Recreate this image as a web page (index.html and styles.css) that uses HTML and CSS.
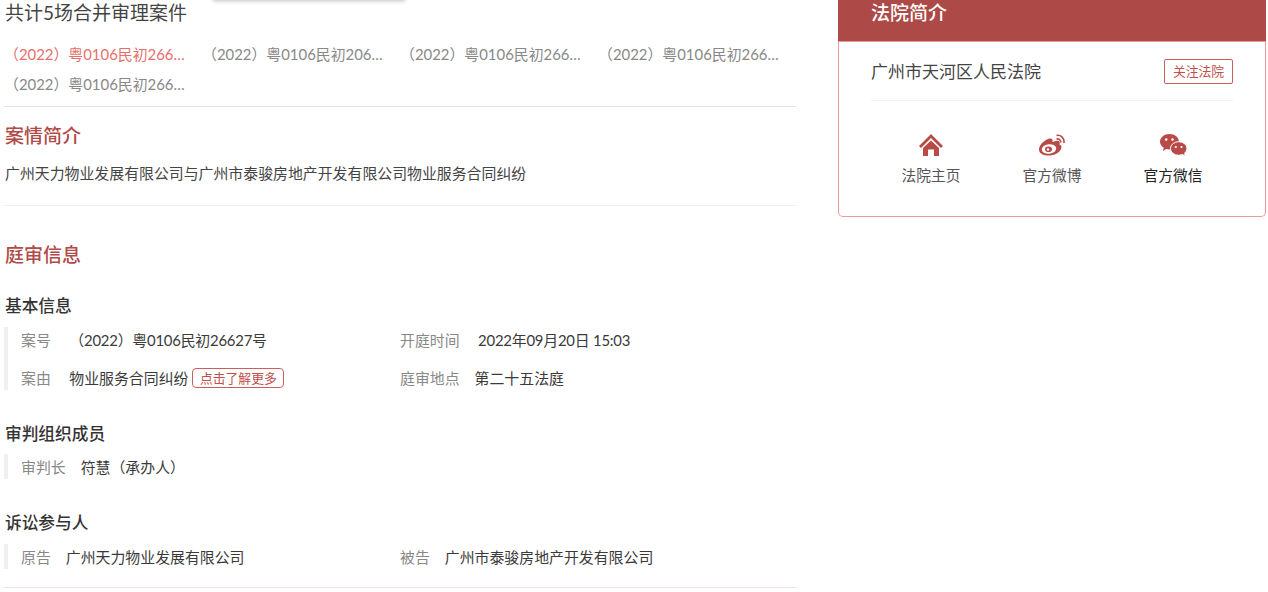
FILE: index.html
```html
<!DOCTYPE html>
<html lang="zh-CN">
<head>
    <meta charset="UTF-8">
    <meta name="viewport" content="width=device-width, initial-scale=1.0">
    <title>庭审信息</title>
    <link rel="stylesheet" href="styles.css">
</head>
<body>
    <div class="popup-edge"></div>
    <div class="page">
        <div class="main">
            <h3 class="merge-title">共计5场合并审理案件</h3>
            <div class="case-tabs">
                <a class="case-tab active">（2022）粤0106民初266…</a>
                <a class="case-tab">（2022）粤0106民初206…</a>
                <a class="case-tab">（2022）粤0106民初266…</a>
                <a class="case-tab">（2022）粤0106民初266…</a>
                <a class="case-tab">（2022）粤0106民初266…</a>
            </div>

            <div class="brief">
                <h2 class="red-title">案情简介</h2>
                <p class="brief-text">广州天力物业发展有限公司与广州市泰骏房地产开发有限公司物业服务合同纠纷</p>
            </div>

            <div class="trial">
                <h2 class="red-title">庭审信息</h2>

                <h4 class="sub-title">基本信息</h4>
                <div class="info-block">
                    <div class="info-row">
                        <div class="info-item wide-gap"><span class="label">案号</span><span class="value num">（2022）粤0106民初26627号</span></div>
                        <div class="info-item wide-gap"><span class="label">开庭时间</span><span class="value num">2022年09月20日 15:03</span></div>
                    </div>
                    <div class="info-row">
                        <div class="info-item wide-gap"><span class="label">案由</span><span class="value">物业服务合同纠纷</span><a class="more-btn">点击了解更多</a></div>
                        <div class="info-item"><span class="label">庭审地点</span><span class="value">第二十五法庭</span></div>
                    </div>
                </div>

                <h4 class="sub-title tight">审判组织成员</h4>
                <div class="info-block">
                    <div class="info-row">
                        <div class="info-item"><span class="label">审判长</span><span class="value">符慧（承办人）</span></div>
                    </div>
                </div>

                <h4 class="sub-title">诉讼参与人</h4>
                <div class="info-block">
                    <div class="info-row">
                        <div class="info-item"><span class="label">原告</span><span class="value">广州天力物业发展有限公司</span></div>
                        <div class="info-item"><span class="label">被告</span><span class="value">广州市泰骏房地产开发有限公司</span></div>
                    </div>
                </div>
            </div>
        </div>

        <div class="court-card">
            <div class="court-head">法院简介</div>
            <div class="court-body">
                <div class="court-name-row">
                    <span class="court-name">广州市天河区人民法院</span>
                    <a class="follow-btn">关注法院</a>
                </div>
                <div class="court-links">
                    <a class="court-link">
                        <svg class="icon" width="24" height="22" viewBox="0 0 24 22">
                            <path d="M12 0 L24 12 L22 14 L12 4 L2 14 L0 12 Z"/>
                            <path d="M4 14 L12 6.500 L20 14 V22 H15 V15.500 H9 V22 H4 Z"/>
                        </svg>
                        <span>法院主页</span>
                    </a>
                    <a class="court-link">
                        <svg class="icon" width="26" height="22" viewBox="0 0 26 22">
                            <path d="M17 7 C20 6 21.500 8 20.500 10.500 C22.500 11.200 23 13 22 15 C20 19.500 14.500 21.500 9.500 21.500 C4.500 21.500 0 19.500 0 15.500 C0 12 3 8.500 6.500 6.200 C10 4 12.500 4.200 13.300 5.500 C13.800 6.400 13.600 7.300 13.300 8 C14.500 7.700 15.800 7.300 17 7 Z"/>
                            <ellipse cx="10" cy="15" rx="7.300" ry="4.800" fill="#fff" transform="rotate(-8 10 15)"/>
                            <ellipse cx="9.500" cy="15.300" rx="3.500" ry="2.800"/>
                            <circle cx="9" cy="15.500" r="1.200" fill="#fff"/>
                            <path class="wave" d="M17.500 5 C19.500 4.500 21.500 5.500 22 8.500"/>
                            <path class="wave" d="M17.500 1.500 C21.500 0.500 25.500 3.500 25 9"/>
                        </svg>
                        <span>官方微博</span>
                    </a>
                    <a class="court-link dark">
                        <svg class="icon" width="27" height="22" viewBox="0 0 27 22">
                            <path d="M9.500 0 C14.700 0 19 3.400 19 7.800 C19 12.200 14.700 15.600 9.500 15.600 C8.300 15.600 7.200 15.400 6.200 15.100 L3 17 L3.700 13.800 C1.400 12.300 0 10.200 0 7.800 C0 3.400 4.300 0 9.500 0 Z"/>
                            <ellipse cx="18.700" cy="14.500" rx="8.300" ry="6.800" stroke="#fff" stroke-width="1"/>
                            <path d="M22 19 L24.500 21.800 L24 18 Z"/>
                            <circle cx="6.200" cy="5.500" r="1.300" fill="#fff"/>
                            <circle cx="12.500" cy="5.500" r="1.300" fill="#fff"/>
                            <circle cx="15.800" cy="13" r="1.100" fill="#fff"/>
                            <circle cx="21.500" cy="13" r="1.100" fill="#fff"/>
                        </svg>
                        <span>官方微信</span>
                    </a>
                </div>
            </div>
        </div>
    </div>
</body>
</html>
```

FILE: styles.css
```css
html, body { height: 592px; overflow: hidden; }
body { margin: 0; background: #fff; color: #333; font-family: Lato, "Noto Sans CJK SC", sans-serif; }
h2, h3, h4, p { margin: 0; }
.popup-edge { position: absolute; left: 213px; top: -6px; width: 192px; height: 6px; box-shadow: 0 1px 4px rgba(0, 0, 0, 0.25); }
.page { display: flex; align-items: flex-start; padding-left: 4px; }
.main { width: 792px; }

.merge-title { font-size: 19px; font-weight: 400; line-height: 26px; padding-left: 1px; color: #444; }
.case-tabs { display: flex; flex-wrap: wrap; padding: 13px 0 7px; border-bottom: 1px solid #e3e3e3; }
.case-tab { width: 198px; line-height: 30px; font-size: 14.9px; color: #888; white-space: nowrap; }
.case-tab.active { color: #e6706c; }

.red-title { font-size: 19px; font-weight: 500; line-height: 26px; padding-left: 1px; color: #b04a48; }
.brief { padding: 16px 0 20px; border-bottom: 1px solid #eee; }
.brief-text { margin-top: 12px; padding-left: 1px; font-size: 14.9px; line-height: 24px; color: #444; }

.trial { padding: 36px 0 18px; border-bottom: 1px solid #f7dedc; }
.sub-title { margin: 26px 0 9px; padding-left: 1px; font-size: 16.7px; font-weight: 500; line-height: 24px; color: #333; }
.info-block { border-left: 4px solid #f0f0f0; padding-left: 13px; }
.info-block + .sub-title { margin-top: 32px; }
.sub-title.tight { margin-bottom: 8px; }
.info-row { display: flex; height: 25px; align-items: center; font-size: 14.9px; }
.info-row + .info-row { margin-top: 13px; }
.info-item { display: flex; align-items: center; width: 379px; white-space: nowrap; }
.label { color: #888; margin-right: 15px; }
.wide-gap .label { margin-right: 18.5px; }
.value { color: #3a3a3a; }
.value.num { letter-spacing: -0.22px; }
.more-btn { margin-left: 4px; padding: 0 6.5px; height: 18px; line-height: 18px; border: 1px solid #c9605e; border-radius: 4px; font-size: 12.8px; color: #c0504d; }

.court-card { box-sizing: border-box; width: 428px; height: 217px; margin-left: 42px; border: 1px solid #ea9a98; border-top: 0; border-radius: 0 0 5px 5px; }
.court-head { margin: 0 -1px; height: 41px; padding-left: 33px; border-bottom: 1px solid #e59c99; background: #ad4a47; color: #fff; font-size: 19px; font-weight: 500; line-height: 26px; }
.court-body { padding: 0 32px; }
.court-name-row { display: flex; justify-content: space-between; align-items: center; height: 58px; border-bottom: 1px solid #faf0f0; }
.court-name { padding-bottom: 2px; font-size: 17px; color: #444; }
.follow-btn { box-sizing: border-box; width: 69px; height: 25px; line-height: 23px; text-align: center; border: 1px solid #c9605e; border-radius: 2px; font-size: 12.8px; color: #c0504d; }
.court-links { display: grid; grid-template-columns: repeat(3, 121px); justify-content: center; padding-top: 33px; }
.court-link { display: flex; flex-direction: column; align-items: center; font-size: 14.7px; line-height: 20px; color: #555; }
.court-link.dark { color: #222; }
.icon { display: block; margin-bottom: 9px; fill: #b84a47; }
.wave { fill: none; stroke: #b84a47; stroke-width: 1.6; }
```
